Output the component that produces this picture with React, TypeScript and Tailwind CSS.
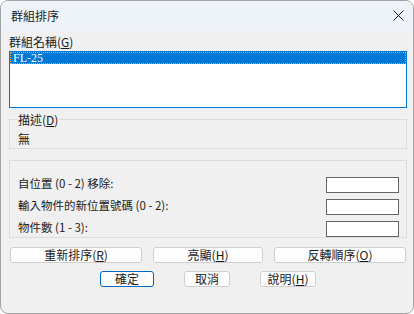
import React from "react";

const font = { fontFamily: '"Noto Sans CJK TC", "Noto Sans", sans-serif' };

function Btn({ w, children, def }: { w: string; children: React.ReactNode; def?: boolean }) {
  return (
    <div
      className={`${w} h-[16px] flex items-center justify-center rounded-[3px] bg-[#fdfdfd] text-[12px] leading-none text-[#1a1a1a] border ${
        def ? "border-[#0067c0]" : "border-[#cfcfcf]"
      }`}
    >
      {children}
    </div>
  );
}

function Row({ label }: { label: React.ReactNode }) {
  return (
    <div className="h-[22px] flex items-start justify-between">
      <div className="text-[11.5px] leading-[14px] mt-[-1px] text-[#1a1a1a]">{label}</div>
      <div className="w-[73px] h-[16px] bg-white border border-[#646464]" />
    </div>
  );
}

export default function App() {
  return (
    <div className="w-[414px] h-[314px] bg-white" style={font}>
      <div className="w-[414px] h-[314px] rounded-[8px] border border-[#a3a3a3] bg-[#f0f0f0] overflow-hidden flex flex-col">
        <div className="h-[30px] shrink-0 bg-[#eef3f9] flex items-center justify-between pl-[10px] pr-[9px]">
          <span className="text-[12px] leading-none text-[#1a1a1a] mt-[-1px]">群組排序</span>
          <svg width="11" height="11" viewBox="0 0 11 11" className="mt-[-1px]">
            <path d="M0.5 0.5 L10.5 10.5 M10.5 0.5 L0.5 10.5" stroke="#1a1a1a" strokeWidth="1" />
          </svg>
        </div>
        <div className="flex flex-col pl-[8px] pr-[6px]">
          <div className="mt-[3px] h-[15px] text-[12px] leading-[15px] text-[#1a1a1a]">
            群組名稱(<span className="underline">G</span>)
          </div>
          <div className="mt-[2px] h-[57px] bg-white border border-[#0078d7] p-0">
            <div
              className="h-[12px] bg-[#0078d7] border border-dotted border-[#f0a040] text-white text-[12px] leading-[10px] pl-[2px]"
              style={{ fontFamily: '"Liberation Serif", serif' }}
            >
              FL-25
            </div>
          </div>
          <div className="relative mt-[11px] h-[30px] border border-[#dcdcdc]">
            <span className="absolute left-[7px] top-[-8px] bg-[#f0f0f0] px-[1px] text-[12px] leading-[15px] text-[#1a1a1a]">
              描述(<span className="underline">D</span>)
            </span>
            <div className="pl-[8px] pt-[12px] text-[12px] leading-[14px] text-[#1a1a1a]">無</div>
          </div>
          <div className="mt-[11px] h-[78px] border border-[#dcdcdc] pl-[8px] pr-[7px] pt-[16px]">
            <Row label="自位置 (0 - 2) 移除:" />
            <Row label="輸入物件的新位置號碼 (0 - 2):" />
            <Row label="物件數 (1 - 3):" />
          </div>
          <div className="mt-[9px] flex gap-[11px] ml-[1px]">
            <Btn w="w-[132px]">重新排序(<span className="underline">R</span>)</Btn>
            <Btn w="w-[110px]">亮顯(<span className="underline">H</span>)</Btn>
            <Btn w="w-[132px]">反轉順序(<span className="underline">O</span>)</Btn>
          </div>
          <div className="mt-[8px] flex gap-[30px] ml-[91px]">
            <Btn w="w-[54px]" def>確定</Btn>
            <Btn w="w-[46px]">取消</Btn>
            <Btn w="w-[56px]">說明(<span className="underline">H</span>)</Btn>
          </div>
        </div>
      </div>
    </div>
  );
}
